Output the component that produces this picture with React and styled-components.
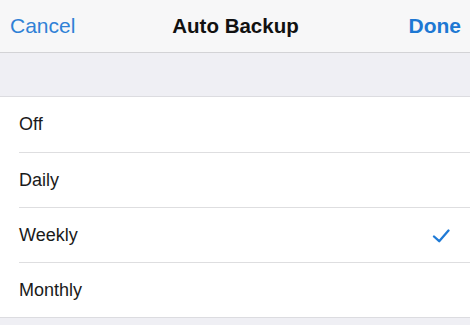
import React from 'react';
import styled, { createGlobalStyle } from 'styled-components';

const GlobalStyle = createGlobalStyle`
    html, body {
        margin: 0;
        padding: 0;
        background: #efeff4;
        font-family: 'Liberation Sans', Arial, sans-serif;
    }
`;

const Screen = styled.div`
    width: 470px;
    height: 325px;
    overflow: hidden;
    background: #efeff4;
    display: flex;
    flex-direction: column;
`;

const NavBar = styled.div`
    height: 52px;
    display: grid;
    grid-template-columns: 1fr auto 1fr;
    align-items: center;
    padding: 0 9px 0 10px;
    background: #f7f7f8;
    border-bottom: 1px solid #d3d3d6;
`;

const NavButton = styled.button`
    border: none;
    background: none;
    padding: 0;
    font-family: inherit;
    font-size: 21px;
    font-weight: ${props => (props.$bold ? 700 : 400)};
    color: ${props => (props.$bold ? '#1d78d3' : '#2f81d6')};
    justify-self: ${props => (props.$right ? 'end' : 'start')};
    cursor: pointer;
`;

const Title = styled.div`
    font-size: 20.5px;
    font-weight: 700;
    color: #111;
`;

const Spacer = styled.div`
    height: 43px;
    border-bottom: 1px solid #dcdce0;
`;

const List = styled.div`
    background: #fff;
    border-bottom: 1px solid #dcdce0;
    padding-left: 19px;
`;

const Row = styled.div`
    box-sizing: border-box;
    height: 55px;
    display: flex;
    align-items: center;
    justify-content: space-between;
    padding-right: 20px;
    font-size: 18px;
    color: #1a1a1a;
    border-top: ${props => (props.$first ? 'none' : '1px solid #dedee0')};
`;

const Check = () => (
    <svg width="18" height="15" viewBox="0 0 18 15">
        <polyline
            points="2,8.5 7.2,13.2 16.5,2.5"
            fill="none"
            stroke="#1f7ad6"
            strokeWidth="2.3"
            strokeLinecap="round"
            strokeLinejoin="round"
        />
    </svg>
);

const options = ['Off', 'Daily', 'Weekly', 'Monthly'];

export default function App() {
    const selected = 'Weekly';
    return (
        <>
            <GlobalStyle />
            <Screen>
                <NavBar>
                    <NavButton>Cancel</NavButton>
                    <Title>Auto Backup</Title>
                    <NavButton $bold $right>Done</NavButton>
                </NavBar>
                <Spacer />
                <List>
                    {options.map((item, i) => (
                        <Row key={item} $first={i === 0}>
                            {item}
                            {item === selected && <Check />}
                        </Row>
                    ))}
                </List>
            </Screen>
        </>
    );
}
